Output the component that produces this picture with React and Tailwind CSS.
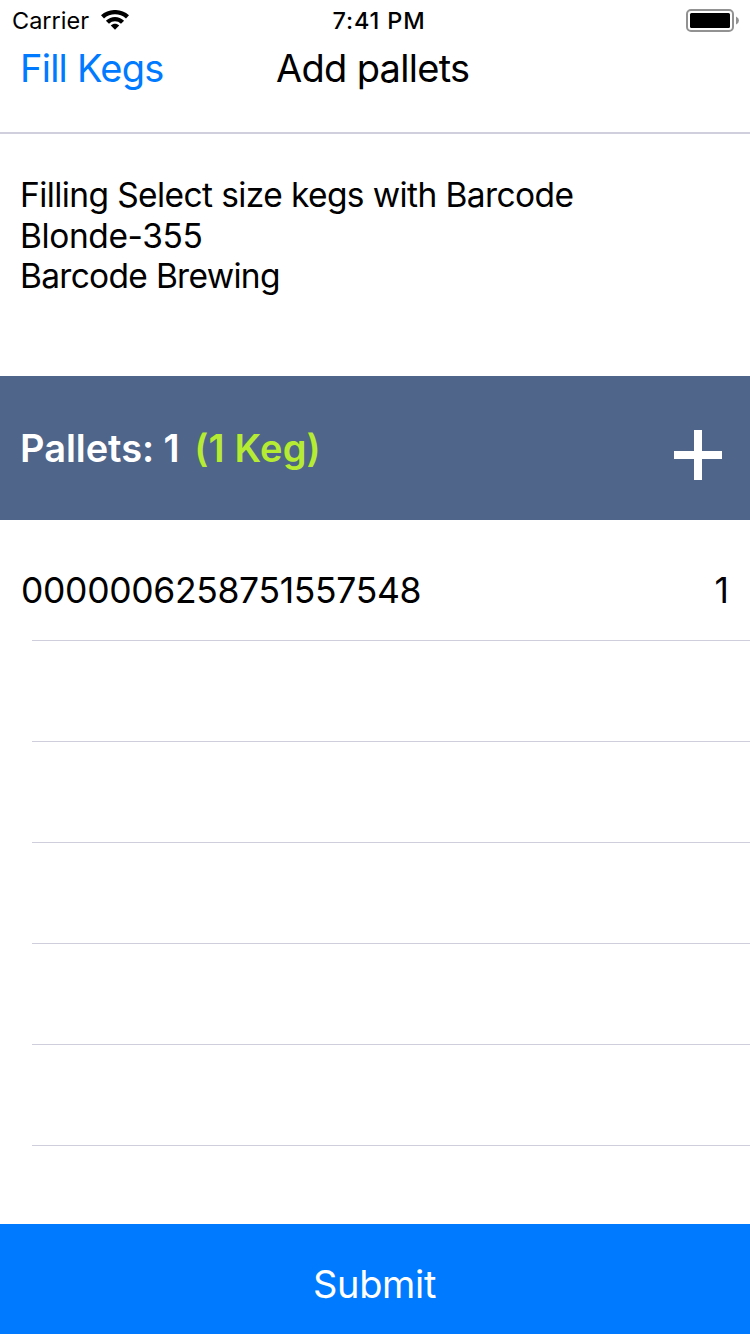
function Row({ code, count }) {
  return (
    <div className="ml-8 flex h-[101px] shrink-0 items-center justify-between border-b border-[#cfcedd] pr-[21px] text-[35.5px] leading-[43px]">
      <span className="-ml-[11px] whitespace-nowrap tracking-[-0.35px]">{code}</span>
      <span>{count}</span>
    </div>
  );
}

export default function App() {
  return (
    <div className="flex h-[1334px] w-[750px] flex-col overflow-hidden bg-white font-['Inter',sans-serif] text-black">
      <div className="grid h-10 grid-cols-3 items-center pl-3 pr-[11px] text-[23.5px] leading-none">
        <div className="flex items-center gap-3">
          <span className="pt-[2px]">Carrier</span>
          <svg width="28" height="20" viewBox="0 0 28 20">
            <path d="M0 5.3C7.8-1.8 20.2-1.8 28 5.3L25 8.4C18.8 2.8 9.2 2.8 3 8.4ZM4.9 10.8C10 5.7 18 5.7 23.1 10.8L20 13.7C16.6 10.4 11.4 10.4 8 13.7ZM9.8 15.5C12.2 13.1 15.8 13.1 18.2 15.5L14 19.8Z" />
          </svg>
        </div>
        <span className="pl-[7px] pt-[2px] text-center font-medium tracking-[0.85px]">7:41 PM</span>
        <svg className="justify-self-end" width="53" height="24" viewBox="0 0 53 24">
          <rect x="1" y="2" width="46" height="21" rx="4" fill="none" stroke="#929292" strokeWidth="2" />
          <rect x="4" y="5" width="40" height="15" rx="1.5" />
          <path d="M50 8.5q3 1.5 3 4t-3 4z" fill="#929292" />
        </svg>
      </div>
      <div className="grid h-[94px] grid-cols-[256px_1fr] border-b-2 border-[#d0cfde] pl-5 pt-1 text-[38px] leading-[48px]">
        <span className="tracking-[-0.75px] text-[#007aff]">Fill Kegs</span>
        <span className="tracking-[-0.7px]">Add pallets</span>
      </div>
      <div className="h-[242px] pl-5 pt-[41px] text-[33.5px] leading-[40.5px]">
        <p className="tracking-[-0.6px]">Filling Select size kegs with Barcode</p>
        <p className="tracking-[-0.4px]">Blonde-355</p>
        <p className="tracking-[-0.7px]">Barcode Brewing</p>
      </div>
      <div className="flex h-36 items-center justify-between bg-[#4f658a] pl-5 pr-7 text-[38px] font-semibold text-white">
        <p>
          <span className="tracking-[-0.05px]">Pallets: 1 </span>
          <span className="ml-[5px] tracking-[0.2px] text-[#b5eb32]">(1 Keg)</span>
        </p>
        <svg className="mt-[14px]" width="48" height="50" viewBox="0 0 48 50">
          <path d="M24 0v50M0 25h48" stroke="#fff" strokeWidth="8" />
        </svg>
      </div>
      <div className="flex flex-col pt-5">
        <Row code="0000006258751557548" count="1" />
        <Row />
        <Row />
        <Row />
        <Row />
        <Row />
      </div>
      <div className="mt-auto flex h-[110px] shrink-0 items-center justify-center bg-[#007aff] pr-px pt-[11px] text-[38px] tracking-[-0.3px] text-white">Submit</div>
    </div>
  );
}
